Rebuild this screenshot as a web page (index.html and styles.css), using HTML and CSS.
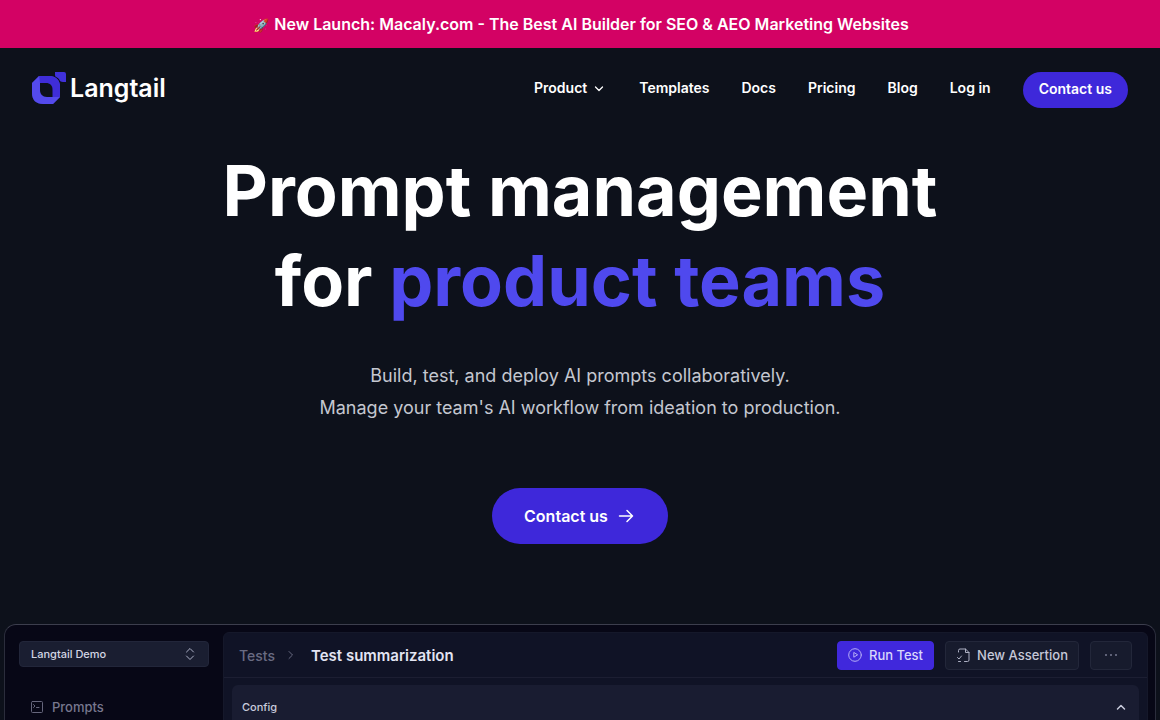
FILE: index.html
```html
<!DOCTYPE html>
<html lang="en">
<head>
  <meta charset="UTF-8">
  <meta name="viewport" content="width=device-width, initial-scale=1.0">
  <title>Langtail - Prompt management for product teams</title>
  <link rel="stylesheet" href="styles.css">
</head>
<body>
  <a class="banner" href="#"><span class="rocket">🚀</span> New Launch: Macaly.com - The Best AI Builder for SEO &amp; AEO Marketing Websites</a>

  <header class="header">
    <a class="logo" href="#">
      <svg width="34" height="32" viewBox="0 0 34 32" aria-hidden="true">
        <path fill="#4b43e6" d="M7 4H17C24 4 28 8 28 15V25L21 32H11C4 32 0 28 0 21V11Z"/>
        <path fill="#3f2dd8" d="M7 4H17C24 4 28 8 28 15V25H20V18C20 13 17 11 13 11H8Z"/>
        <path fill="#5a50f0" d="M0 21V11L7 4L8 11V18C8 22 11 25 15 25H28L21 32H11C4 32 0 28 0 21Z" opacity=".6"/>
        <path fill="#0d111b" d="M8 11H14C18 11 20.500 13.500 20.500 17.500V25H15C10.500 25 8 22 8 18Z"/>
        <path fill="#4031da" d="M24 0H32Q34 0 34 2V10H31C29 10 28 9 27.500 8C27 7 26 6 25 5.500C24 5 23 4.500 23 3V0Z"/>
      </svg>
      <span>Langtail</span>
    </a>
    <nav class="nav">
      <button class="nav-link nav-menu" type="button">Product
        <svg width="16" height="16" viewBox="0 0 16 16" aria-hidden="true"><path d="M4.500 7L8 10.500L11.500 7"/></svg>
      </button>
      <a class="nav-link" href="#">Templates</a>
      <a class="nav-link" href="#">Docs</a>
      <a class="nav-link" href="#">Pricing</a>
      <a class="nav-link" href="#">Blog</a>
      <a class="nav-link" href="#">Log in</a>
      <a class="nav-cta" href="#">Contact us</a>
    </nav>
  </header>

  <main>
    <section class="hero">
      <h1>Prompt management<br>for <span class="accent">product teams</span></h1>
      <p>Build, test, and deploy AI prompts collaboratively.<br>Manage your team's AI workflow from ideation to production.</p>
      <a class="hero-cta" href="#">Contact us
        <svg width="20" height="20" viewBox="0 0 20 20" aria-hidden="true"><path d="M3.500 10H16.500M11 4.500L16.500 10L11 15.500"/></svg>
      </a>
    </section>

    <section class="preview">
      <aside class="sidebar">
        <div class="project">
          <select aria-label="Project">
            <option>Langtail Demo</option>
          </select>
          <svg width="12" height="14" viewBox="0 0 12 14" aria-hidden="true"><path d="M2.500 5L6 1.500L9.500 5M2.500 9L6 12.500L9.500 9"/></svg>
        </div>
        <a class="side-link" href="#">
          <svg width="14" height="14" viewBox="0 0 14 14" aria-hidden="true"><rect x="1.500" y="1.500" width="11" height="11" rx="1"/><path d="M3.500 4.500L5 6L3.500 7.500M6.500 7.500H9"/></svg>
          Prompts
        </a>
      </aside>
      <div class="workspace">
        <div class="toolbar">
          <a class="crumb" href="#">Tests</a>
          <svg class="crumb-arrow" width="8" height="12" viewBox="0 0 8 12" aria-hidden="true"><path d="M2 2.500L5.500 6L2 9.500"/></svg>
          <h2>Test summarization</h2>
          <button class="tool primary" type="button">
            <svg width="14" height="14" viewBox="0 0 14 14" aria-hidden="true"><circle cx="7" cy="7" r="6.300"/><path d="M5.800 4.800V9.200L9.300 7Z"/></svg>
            Run Test
          </button>
          <button class="tool" type="button">
            <svg width="14" height="14" viewBox="0 0 14 14" aria-hidden="true"><path d="M2.500 4V2.500Q2.500 1 4 1H9.500L13 4.500V12Q13 13.500 11.500 13.500H8.500M9.500 1V4.500H13M1.500 9.500L3 11L5.500 8M2.500 13.500H4.500"/></svg>
            New Assertion
          </button>
          <button class="tool more" type="button" aria-label="More">
            <svg width="14" height="4" viewBox="0 0 14 4" aria-hidden="true"><circle cx="2" cy="2" r="1"/><circle cx="7" cy="2" r="1"/><circle cx="12" cy="2" r="1"/></svg>
          </button>
        </div>
        <button class="config" type="button">Config
          <svg width="12" height="12" viewBox="0 0 12 12" aria-hidden="true"><path d="M2.500 8L6 4.500L9.500 8"/></svg>
        </button>
      </div>
    </section>
  </main>
</body>
</html>
```
FILE: styles.css
```css
* {
  box-sizing: border-box;
}
body {
  margin: 0;
  background: #0d111b;
  color: #fff;
  font-family: Inter, "Liberation Sans", sans-serif;
}
a {
  color: inherit;
  text-decoration: none;
}
button,
select {
  font-family: inherit;
  cursor: pointer;
}
svg {
  flex: none;
  fill: none;
  stroke-linecap: round;
  stroke-linejoin: round;
}

.banner {
  display: block;
  padding: 12px;
  background: #d30264;
  font-size: 16px;
  font-weight: 600;
  line-height: 24px;
  text-align: center;
}
.rocket {
  display: inline-block;
  width: 19px;
  font-size: 13px;
  line-height: 16px;
}

.header {
  display: flex;
  justify-content: space-between;
  padding: 24px 32px 0;
}
.logo {
  display: flex;
  gap: 4px;
  height: 32px;
  font-size: 25px;
  font-weight: 600;
  line-height: 32px;
}
.nav {
  display: flex;
  gap: 32px;
  font-size: 14px;
  font-weight: 600;
  line-height: 32px;
}
.nav-link {
  height: 32px;
}
.nav-menu {
  display: flex;
  align-items: center;
  gap: 4px;
  padding: 0;
  border: 0;
  background: none;
  color: inherit;
  font-size: 14px;
  font-weight: 600;
  line-height: 32px;
}
.nav-menu svg {
  stroke: #fff;
  stroke-width: 1.3;
}
.nav-cta {
  height: 36px;
  padding: 0 16px;
  border-radius: 18px;
  background: #3e28da;
  line-height: 34px;
}

.hero {
  padding: 38px 24px 80px;
  text-align: center;
}
h1 {
  margin: 0 0 34px;
  font-size: 70px;
  font-weight: 700;
  line-height: 90px;
}
.accent {
  color: #4f49ee;
}
.hero p {
  margin: 0 0 64px;
  color: #c4c7d0;
  font-size: 18px;
  line-height: 32px;
}
.hero-cta {
  display: inline-flex;
  align-items: center;
  gap: 8px;
  height: 56px;
  padding: 0 32px;
  border-radius: 28px;
  background: #3e28da;
  font-size: 16px;
  font-weight: 600;
  vertical-align: top;
}
.hero-cta svg {
  stroke: #fff;
  stroke-width: 1.5;
}

.preview {
  display: flex;
  gap: 14px;
  margin: 0 4px;
  padding: 7px 7px 7px 14px;
  border: 1px solid #2b2d3c;
  border-top-color: #3c3e4d;
  border-bottom: 0;
  border-radius: 12px 12px 0 0;
  background: #070716;
}
.sidebar {
  flex: none;
  width: 190px;
  padding-top: 9px;
}
.project {
  position: relative;
}
.project select {
  width: 100%;
  height: 26px;
  padding: 0 11px;
  border: 1px solid #22263a;
  border-radius: 4px;
  background: #1a1e31;
  color: #d3d5e4;
  font-size: 11px;
  font-weight: 500;
  appearance: none;
}
.project svg {
  position: absolute;
  top: 6px;
  right: 13px;
  stroke: #aeb2c8;
  pointer-events: none;
}
.side-link {
  display: flex;
  align-items: center;
  gap: 8px;
  margin-top: 30px;
  padding-left: 11px;
  color: #77778e;
  font-size: 13px;
  font-weight: 500;
  line-height: 20px;
}
.side-link svg {
  stroke: #66667c;
}
.workspace {
  flex: 1;
  border: 1px solid #15182a;
  border-radius: 6px 6px 0 0;
  background: #101326;
}
.toolbar {
  display: flex;
  align-items: center;
  height: 45px;
  padding: 0 15px;
  border-bottom: 1px solid #1c1e32;
}
.crumb {
  color: #696b82;
  font-size: 14px;
  font-weight: 500;
}
.crumb-arrow {
  margin: 0 16px 0 12px;
  stroke: #696b82;
}
h2 {
  margin: 0 auto 0 0;
  color: #e3e4f3;
  font-size: 15px;
  font-weight: 600;
}
.tool {
  display: flex;
  align-items: center;
  justify-content: center;
  gap: 7px;
  height: 29px;
  margin-left: 11px;
  padding: 0 10px;
  border: 1px solid #23273a;
  border-radius: 4px;
  background: #171b2d;
  color: #c6c8d8;
  font-size: 13px;
  font-weight: 500;
}
.tool svg {
  stroke: #aeb1c4;
}
.primary {
  border-color: #4028dc;
  background: #4028dc;
  color: #d9d7fb;
}
.primary svg {
  stroke: #b5adf6;
}
.more {
  width: 42px;
}
.more svg {
  fill: #777a90;
  stroke: none;
}
.config {
  display: flex;
  align-items: center;
  justify-content: space-between;
  width: calc(100% - 16px);
  height: 44px;
  margin: 7px 8px 0;
  padding: 0 12px 0 10px;
  border: 0;
  border-radius: 6px 6px 0 0;
  background: #191c31;
  color: #c9cbdc;
  font-size: 11px;
  font-weight: 500;
}
.config svg {
  stroke: #c9cbdc;
  stroke-width: 1.5;
}
```
